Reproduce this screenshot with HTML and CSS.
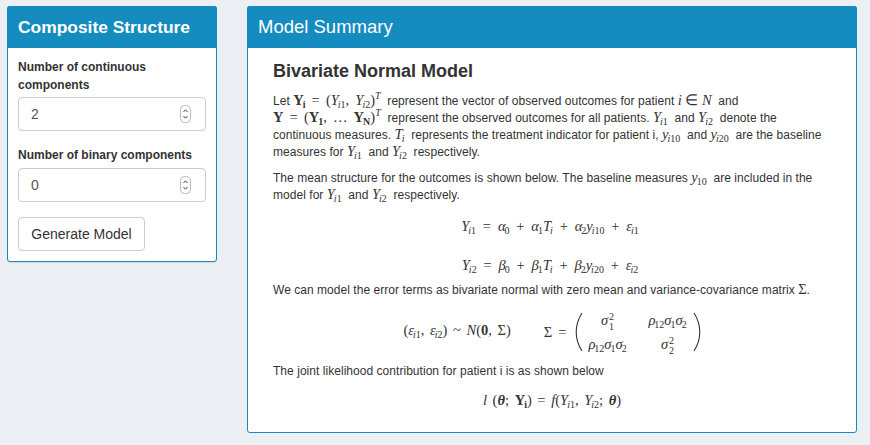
FILE: index.html
```html
<!DOCTYPE html>
<html>
<head>
    <title>Composite Structure</title>
    <link rel="stylesheet" href="styles.css">
</head>
<body>
    <div class="wrapper">
        <div class="box side">
            <div class="box-header title-bold">Composite Structure</div>
            <div class="box-body side-body">
                <label class="field-label" for="cont">Number of continuous components</label>
                <div class="number-input">
                    <input type="text" id="cont" value="2">
                    <svg class="spinner" width="11" height="18" viewBox="0 0 11 18"><rect x="0.5" y="0.5" width="10" height="17" rx="4" fill="#fff" stroke="#bbb"/><path d="M3.5 7 5.5 4.8 7.5 7M3.5 11 5.5 13.2 7.5 11" fill="none" stroke="#444" stroke-width="1"/></svg>
                </div>
                <label class="field-label second" for="bin">Number of binary components</label>
                <div class="number-input">
                    <input type="text" id="bin" value="0">
                    <svg class="spinner" width="11" height="18" viewBox="0 0 11 18"><rect x="0.5" y="0.5" width="10" height="17" rx="4" fill="#fff" stroke="#bbb"/><path d="M3.5 7 5.5 4.8 7.5 7M3.5 11 5.5 13.2 7.5 11" fill="none" stroke="#444" stroke-width="1"/></svg>
                </div>
                <button class="btn">Generate Model</button>
            </div>
        </div>

        <div class="box main">
            <div class="box-header main-title">Model Summary</div>
            <div class="box-body main-body">
                <h3>Bivariate Normal Model</h3>
                <p>Let <span class="m wide"><b>Y<sub>i</sub></b> = (<i>Y</i><sub><i>i</i>1</sub>, <i>Y</i><sub><i>i</i>2</sub>)<sup><i>T</i></sup></span> &nbsp;represent the vector of observed outcomes for patient <span class="m"><i>i</i> ∈ <i>N</i></span> &nbsp;and<br>
                <span class="m wide"><b>Y</b> = (<b>Y<sub>1</sub></b>, … <b>Y<sub>N</sub></b>)<sup><i>T</i></sup></span> &nbsp;represent the observed outcomes for all patients. <span class="m"><i>Y</i><sub><i>i</i>1</sub></span> &nbsp;and <span class="m"><i>Y</i><sub><i>i</i>2</sub></span> &nbsp;denote the<br>
                continuous measures. <span class="m"><i>T</i><sub><i>i</i></sub></span> &nbsp;represents the treatment indicator for patient i, <span class="m"><i>y</i><sub><i>i</i>10</sub></span> &nbsp;and <span class="m"><i>y</i><sub><i>i</i>20</sub></span> &nbsp;are the baseline<br>
                measures for <span class="m"><i>Y</i><sub><i>i</i>1</sub></span> &nbsp;and <span class="m"><i>Y</i><sub><i>i</i>2</sub></span> &nbsp;respectively.</p>
                <p>The mean structure for the outcomes is shown below. The baseline measures <span class="m"><i>y</i><sub>10</sub></span> &nbsp;are included in the<br>
                model for <span class="m"><i>Y</i><sub><i>i</i>1</sub></span> &nbsp;and <span class="m"><i>Y</i><sub><i>i</i>2</sub></span> &nbsp;respectively.</p>

                <div class="eq eq-first m"><i>Y</i><sub><i>i</i>1</sub> = <i>α</i><sub>0</sub> + <i>α</i><sub>1</sub><i>T</i><sub><i>i</i></sub> + <i>α</i><sub>2</sub><i>y</i><sub><i>i</i>10</sub> + <i>ε</i><sub><i>i</i>1</sub></div>
                <div class="eq eq-second m"><i>Y</i><sub><i>i</i>2</sub> = <i>β</i><sub>0</sub> + <i>β</i><sub>1</sub><i>T</i><sub><i>i</i></sub> + <i>β</i><sub>2</sub><i>y</i><sub><i>i</i>20</sub> + <i>ε</i><sub><i>i</i>2</sub></div>

                <p class="after-eq">We can model the error terms as bivariate normal with zero mean and variance-covariance matrix <span class="m">Σ</span>.</p>

                <div class="matrix-eq m">
                    <span class="likelihood">(<i>ε</i><sub><i>i</i>1</sub>, <i>ε</i><sub><i>i</i>2</sub>) ~ <i>N</i>(<b>0</b>, Σ)</span>
                    <span class="sigma wide">Σ =</span>
                    <svg class="paren" width="8" height="40" viewBox="0 0 8 40"><path d="M7 1C2.5 8 1.2 14 1.2 20S2.5 32 7 39" fill="none" stroke="#333" stroke-width="1.1"/></svg>
                    <div class="matrix">
                        <span class="cell"><i>σ</i><span class="stack"><span>2</span><span>1</span></span></span>
                        <span class="cell"><i>ρ</i><sub>12</sub><i>σ</i><sub>1</sub><i>σ</i><sub>2</sub></span>
                        <span class="cell"><i>ρ</i><sub>12</sub><i>σ</i><sub>1</sub><i>σ</i><sub>2</sub></span>
                        <span class="cell"><i>σ</i><span class="stack"><span>2</span><span>2</span></span></span>
                    </div>
                    <svg class="paren" width="8" height="40" viewBox="0 0 8 40"><path d="M1 1C5.5 8 6.8 14 6.8 20S5.5 32 1 39" fill="none" stroke="#333" stroke-width="1.1"/></svg>
                </div>

                <p class="joint">The joint likelihood contribution for patient i is as shown below</p>
                <div class="eq eq-last m"><i>l</i> (<b><i>θ</i></b>; <b>Y<sub>i</sub></b>) = <i>f</i>(<i>Y</i><sub><i>i</i>1</sub>, <i>Y</i><sub><i>i</i>2</sub>; <b><i>θ</i></b>)</div>
            </div>
        </div>
    </div>
</body>
</html>
```

FILE: styles.css
```css
body {
    margin: 0;
    background-color: #ecf0f5;
    font-family: "Liberation Sans", Arial, sans-serif;
    font-size: 12px;
    color: #333;
}
.wrapper {
    display: flex;
    align-items: flex-start;
    gap: 30px;
    padding: 6px 13px 0 7px;
}
.box {
    background-color: #fff;
    border: 1px solid #148cc0;
    border-radius: 3px;
    box-shadow: 0 1px 1px rgba(0, 0, 0, 0.1);
    box-sizing: border-box;
}
.side {
    width: 210px;
    height: 256px;
}
.main {
    width: 610px;
    height: 427px;
}
.box-header {
    height: 41px;
    line-height: 40px;
    padding-left: 11px;
    margin: -1px -1px 0;
    padding-top: 1px;
    background-color: #148cc0;
    border-radius: 3px 3px 0 0;
    color: #fff;
    font-size: 18px;
}
.main-title {
    font-size: 18.5px;
}
.title-bold {
    font-weight: bold;
    font-size: 17.4px;
}
.side-body {
    padding: 10px 10px;
}
.field-label {
    display: block;
    font-weight: bold;
    line-height: 18px;
    margin-bottom: 3px;
}
.field-label.second {
    margin-top: 15px;
    margin-bottom: 4px;
}
.number-input {
    display: flex;
    align-items: center;
    height: 34px;
    box-sizing: border-box;
    border: 1px solid #ccc;
    border-radius: 4px;
    padding: 0 14px 0 12px;
}
.number-input input {
    flex: 1;
    min-width: 0;
    border: 0;
    padding: 0;
    outline: 0;
    font: 14px "Liberation Sans", Arial, sans-serif;
    color: #555;
}
.btn {
    display: block;
    margin-top: 15px;
    width: 127px;
    height: 34px;
    background-color: #fff;
    border: 1px solid #ccc;
    border-radius: 4px;
    font: 14px "Liberation Sans", Arial, sans-serif;
    color: #333;
}
.main-body {
    padding: 13px 25px 0;
}
h3 {
    margin: 0 0 12px;
    font-size: 18px;
    line-height: 20px;
    font-weight: bold;
}
p {
    margin: 0 0 9px;
    line-height: 17px;
    letter-spacing: 0.04px;
    white-space: nowrap;
}
.m {
    font-family: "Liberation Serif", "Times New Roman", serif;
    font-size: 14.5px;
    letter-spacing: 0;
    line-height: 0;
}
.wide {
    word-spacing: 2.5px;
}
.m sub, .m sup {
    font-size: 10px;
    line-height: 0;
}
.m sub {
    vertical-align: -3px;
    margin-left: -1px;
}
.m sup {
    vertical-align: 6px;
}
.eq {
    text-align: center;
    line-height: 17px;
    word-spacing: 3.2px;
    padding-right: 4px;
}
.eq-first {
    margin-top: 14px;
}
.eq-second {
    margin-top: 22px;
}
.after-eq {
    margin-top: 8px;
    margin-bottom: 0;
}
.matrix-eq {
    display: flex;
    justify-content: center;
    align-items: center;
    height: 50px;
    margin-top: 8px;
}
.likelihood {
    word-spacing: 2px;
}
.sigma {
    margin: 0 8px 0 33px;
}
.matrix {
    display: grid;
    grid-template-columns: 50px 50px;
    column-gap: 10px;
    row-gap: 7px;
    justify-items: center;
}
.cell {
    height: 17px;
    line-height: 17px;
    white-space: nowrap;
}
.stack {
    display: inline-flex;
    flex-direction: column;
    vertical-align: middle;
    margin-left: 1px;
    font-size: 10px;
    line-height: 10px;
}
.joint {
    margin-top: 6px;
    margin-bottom: 0;
}
.eq-last {
    margin-top: 12px;
    word-spacing: 2px;
    padding-right: 0;
}
```
